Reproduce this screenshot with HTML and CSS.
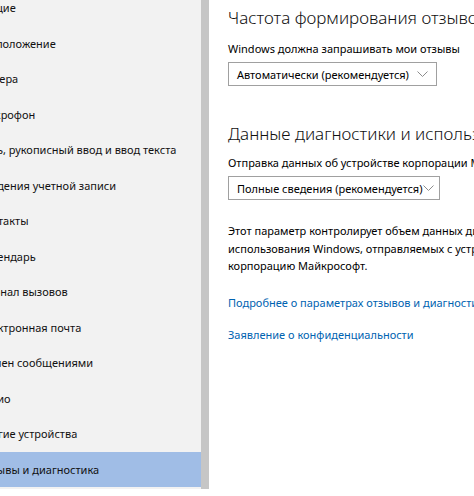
FILE: index.html
```html
<!DOCTYPE html>
<html lang="ru">
<head>
<meta charset="utf-8">
<link rel="stylesheet" href="styles.css">
</head>
<body>
<div class="app">
  <nav class="sidebar">
    <ul class="nav">
      <li class="item">Общие</li>
      <li class="item">Расположение</li>
      <li class="item">Камера</li>
      <li class="item">Микрофон</li>
      <li class="item">Речь, рукописный ввод и ввод текста</li>
      <li class="item">Сведения учетной записи</li>
      <li class="item">Контакты</li>
      <li class="item">Календарь</li>
      <li class="item">Журнал вызовов</li>
      <li class="item">Электронная почта</li>
      <li class="item">Обмен сообщениями</li>
      <li class="item">Радио</li>
      <li class="item">Другие устройства</li>
      <li class="item selected">Отзывы и диагностика</li>
    </ul>
  </nav>
  <div class="divider"></div>
  <main class="content">
    <h2 class="heading first">Частота формирования отзывов</h2>
    <div class="label">Windows должна запрашивать мои отзывы</div>
    <div class="select wide1">
      <span>Автоматически (рекомендуется)</span>
      <svg class="chev" width="11" height="6" viewBox="0 0 11 6"><path d="M0.5 0.5 L5.5 5.5 L10.5 0.5" fill="none" stroke="#8c8c8c" stroke-width="1"/></svg>
    </div>
    <h2 class="heading second">Данные диагностики и использования</h2>
    <div class="label">Отправка данных об устройстве корпорации Майкрософт</div>
    <div class="select wide2">
      <span>Полные сведения (рекомендуется)</span>
      <svg class="chev" width="11" height="6" viewBox="0 0 11 6"><path d="M0.5 0.5 L5.5 5.5 L10.5 0.5" fill="none" stroke="#8c8c8c" stroke-width="1"/></svg>
    </div>
    <p class="desc">Этот параметр контролирует объем данных диагностики и<br>использования Windows, отправляемых с устройства в<br>корпорацию Майкрософт.</p>
    <a class="link first-link" href="#">Подробнее о параметрах отзывов и диагностики</a>
    <a class="link" href="#">Заявление о конфиденциальности</a>
  </main>
</div>
</body>
</html>
```

FILE: styles.css
```css
html, body {
  margin: 0;
  padding: 0;
  background: #ffffff;
  overflow: hidden;
}
body {
  font-family: "Noto Sans", "Open Sans", sans-serif;
  font-size: 11px;
  color: #000000;
  width: 474px;
  height: 496px;
}
.app {
  display: flex;
  height: 496px;
  align-items: flex-start;
}
.sidebar {
  width: 201px;
  height: 489px;
  background: #f2f2f2;
  overflow: hidden;
  flex: none;
}
.nav {
  list-style: none;
  margin: -10px 0 0 -22px;
  padding: 0;
}
.item {
  height: 35.5px;
  line-height: 35.5px;
  white-space: nowrap;
  color: #111111;
}
.item.selected {
  background: #a0bde6;
}
.divider {
  width: 8px;
  height: 489px;
  background: #c6c6c6;
  flex: none;
}
.content {
  padding-left: 19px;
  white-space: nowrap;
  overflow: hidden;
  flex: 1;
  min-width: 0;
}
.heading {
  font-weight: 300;
  font-size: 17px;
  margin: 0;
  line-height: 24px;
  color: #111111;
}
.heading.first {
  margin-top: 6px;
}
.heading.second {
  margin-top: 36px;
}
.label {
  margin-top: 11px;
  line-height: 16px;
}
.heading.second + .label {
  margin-top: 9px;
}
.select {
  margin-top: 5px;
  height: 22px;
  border: 1px solid #a0a0a0;
  display: flex;
  align-items: center;
  justify-content: space-between;
  padding: 0 8px 0 8px;
}
.wide1 { width: 191px; }
.wide2 { width: 194px; }
.chev { flex: none; }
.desc {
  margin: 22px 0 0;
  line-height: 17.5px;
}
.link {
  display: block;
  color: #0063b1;
  text-decoration: none;
  line-height: 16px;
}
.first-link { margin-top: 20px; }
.link + .link { margin-top: 16px; }
```
